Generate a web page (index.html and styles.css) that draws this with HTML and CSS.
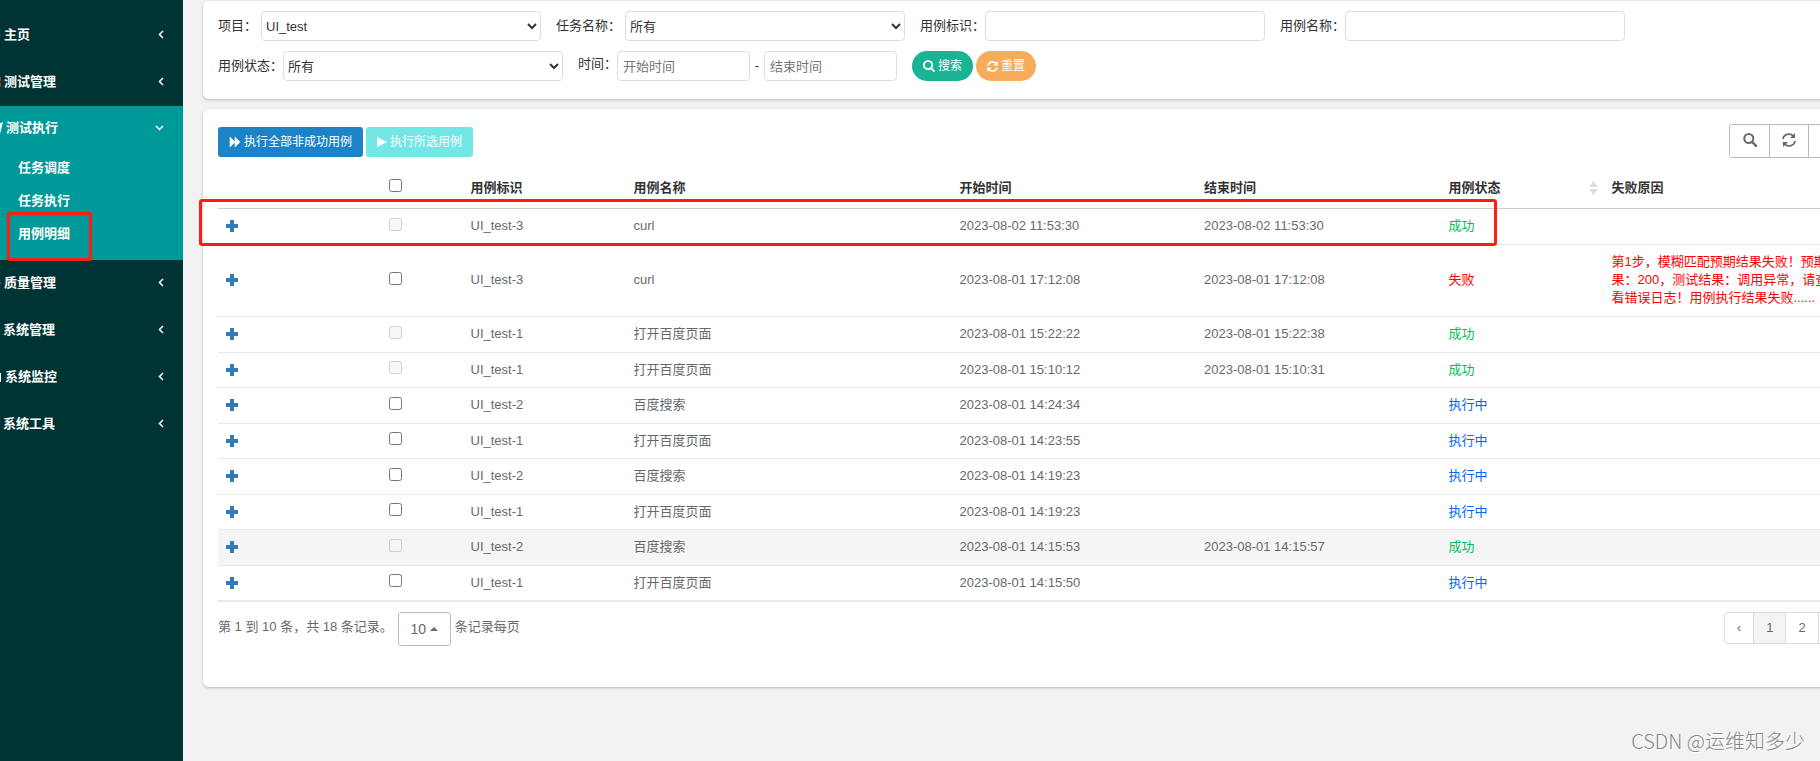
FILE: index.html
```html
<!DOCTYPE html>
<html lang="zh-CN">
<head>
<meta charset="utf-8">
<title>用例明细</title>
<link rel="stylesheet" href="styles.css">
</head>
<body>
<svg class="sprite" aria-hidden="true">
  <symbol id="plus" viewBox="0 0 12 12"><path d="M4 0h4v4h4v4H8v4H4V8H0V4h4z"/></symbol>
  <symbol id="left" viewBox="0 0 6 9"><path d="M5 1 1.500 4.500 5 8" fill="none" stroke="currentColor" stroke-width="1.500"/></symbol>
  <symbol id="down" viewBox="0 0 9 6"><path d="M1 1l3.500 3.500L8 1" fill="none" stroke="currentColor" stroke-width="1.500"/></symbol>
  <symbol id="search" viewBox="0 0 1664 1664"><path d="M1152 704q0-185-131.500-316.500T704 256 387.500 387.500 256 704t131.500 316.500T704 1152t316.500-131.500T1152 704zm512 832q0 52-38 90t-90 38q-54 0-90-38l-343-342q-179 124-399 124-143 0-273.500-55.500t-225-150-150-225T0 704t55.500-273.500 150-225 225-150T704 0t273.500 55.500 225 150 150 225T1408 704q0 220-124 399l343 343q37 37 37 90z"/></symbol>
  <symbol id="refresh" viewBox="0 0 1536 1536"><path d="M1511 928q0 5-1 7-64 268-268 434.500T764 1536q-146 0-282.500-55T238 1324l-129 129q-19 19-45 19t-45-19-19-45V960q0-26 19-45t45-19h448q26 0 45 19t19 45-19 45l-137 137q71 66 161 102t187 36q134 0 250-65t186-179q11-17 53-117 8-23 30-23h192q13 0 22.500 9.500t9.500 22.500zm25-800v448q0 26-19 45t-45 19h-448q-26 0-45-19t-19-45 19-45l138-138Q969 256 768 256q-134 0-250 65T332 500q-11 17-53 117-8 23-30 23H50q-13 0-22.500-9.500T18 608v-7q65-268 270-434.500T768 0q146 0 284 55.500T1297 212l130-129q19-19 45-19t45 19 19 45z"/></symbol>
  <symbol id="find" viewBox="0 0 14 14"><circle cx="5.800" cy="5.500" r="4.500" fill="none" stroke="currentColor" stroke-width="2"/><path d="M9 8.800l4.200 4" stroke="currentColor" stroke-width="2.400" stroke-linecap="round"/></symbol>
  <symbol id="reload" viewBox="0 0 14 14"><path d="M1 6a6 5.500 0 0 1 10.500-3M13 8a6 5.500 0 0 1-10.500 3" fill="none" stroke="currentColor" stroke-width="1.800"/><path d="M13 0v5H8zM1 14V9h5z"/></symbol>
  <symbol id="forward" viewBox="0 0 12 12"><path d="M1 1l5 5-5 5zM6 1l5 5-5 5z" stroke="currentColor" stroke-width="0.600"/></symbol>
  <symbol id="play" viewBox="0 0 10 12"><path d="M0 1l10 5-10 5z"/></symbol>
</svg>
<div class="app">
  <aside class="sidebar">
    <nav>
      <a class="item" href="#"><svg width="14" height="14" viewBox="0 0 14 14"><path class="red" d="M0 7l7-6 7 6-1 1H1z"/></svg>主页<svg class="caret" width="6" height="9"><use href="#left"/></svg></a>
      <a class="item" href="#"><svg width="14" height="14" viewBox="0 0 14 14"><path class="red" d="M1 2h13v4H1zM1 8h13v4H1z"/></svg>测试管理<svg class="caret" width="6" height="9"><use href="#left"/></svg></a>
      <div class="group">
        <a class="item" href="#"><svg width="16" height="14" viewBox="0 0 16 14"><path d="M2 7l14-6-3 12-4-4 3-4-5 4z"/></svg>测试执行<svg class="caret" width="9" height="6"><use href="#down"/></svg></a>
        <a class="sub" href="#">任务调度</a>
        <a class="sub" href="#">任务执行</a>
        <a class="sub" href="#">用例明细</a>
      </div>
      <a class="item" href="#"><svg width="14" height="14" viewBox="0 0 14 14"><path class="red" d="M0 6h14v2H0z"/></svg>质量管理<svg class="caret" width="6" height="9"><use href="#left"/></svg></a>
      <a class="item" href="#"><svg width="13" height="14" viewBox="0 0 13 14"><circle cx="6" cy="7" r="5"/></svg>系统管理<svg class="caret" width="6" height="9"><use href="#left"/></svg></a>
      <a class="item" href="#"><svg width="15" height="14" viewBox="0 0 15 14"><path d="M0 3h14v9H0z"/></svg>系统监控<svg class="caret" width="6" height="9"><use href="#left"/></svg></a>
      <a class="item" href="#"><svg width="13" height="14" viewBox="0 0 13 14"><path d="M1 2h11v10H1z"/></svg>系统工具<svg class="caret" width="6" height="9"><use href="#left"/></svg></a>
    </nav>
  </aside>
  <main>
    <form class="card filters">
      <div class="line">
        <div class="field spaced"><label for="project">项目：</label><select id="project"><option>UI_test</option></select></div>
        <div class="field spaced"><label for="task">任务名称：</label><select id="task"><option>所有</option></select></div>
        <div class="field"><label for="caseid">用例标识：</label><input id="caseid" type="text"></div>
        <div class="field"><label for="casename">用例名称：</label><input id="casename" type="text"></div>
      </div>
      <div class="line">
        <div class="field"><label for="status">用例状态：</label><select id="status"><option>所有</option></select></div>
        <div class="field"><label class="raised" for="start">时间：</label><input class="date" id="start" type="text" placeholder="开始时间"><span class="dash">-</span><input class="date" type="text" placeholder="结束时间" aria-label="结束时间"></div>
        <div class="buttons">
          <button type="button" class="btn round green"><svg width="12" height="12"><use href="#search"/></svg>搜索</button>
          <button type="button" class="btn round orange"><svg width="11" height="11"><use href="#refresh"/></svg>重置</button>
        </div>
      </div>
    </form>
    <section class="card results">
      <div class="toolbar">
        <div class="buttons">
          <button type="button" class="btn blue"><svg width="12" height="12"><use href="#forward"/></svg>执行全部非成功用例</button>
          <button type="button" class="btn cyan" disabled><svg width="10" height="12"><use href="#play"/></svg>执行所选用例</button>
        </div>
        <div class="tools">
          <button type="button" aria-label="搜索"><svg width="14" height="14"><use href="#find"/></svg></button>
          <button type="button" aria-label="刷新"><svg width="14" height="14"><use href="#reload"/></svg></button>
          <button type="button" aria-label="列"></button>
        </div>
      </div>
      <table>
        <colgroup><col class="w2"><col class="w1"><col class="w2"><col class="w4"><col class="w3"><col class="w3"><col class="w2"><col class="w3"></colgroup>
        <thead><tr><th></th><th><input type="checkbox" aria-label="全选"></th><th>用例标识</th><th>用例名称</th><th>开始时间</th><th>结束时间</th><th class="sortable"><div class="sort">用例状态<svg width="9" height="14" viewBox="0 0 9 14"><path d="M4.500 0L9 6H0zM0 8h9l-4.500 6z"/></svg></div></th><th>失败原因</th></tr></thead>
        <tbody>
          <tr><td><svg class="plus" width="12" height="12"><use href="#plus"/></svg></td><td><input type="checkbox" disabled aria-label="选择"></td><td>UI_test-3</td><td>curl</td><td>2023-08-02 11:53:30</td><td>2023-08-02 11:53:30</td><td class="ok">成功</td><td></td></tr>
          <tr class="tall"><td><svg class="plus" width="12" height="12"><use href="#plus"/></svg></td><td><input type="checkbox" aria-label="选择"></td><td>UI_test-3</td><td>curl</td><td>2023-08-01 17:12:08</td><td>2023-08-01 17:12:08</td><td class="fail">失败</td><td class="fail">第1步，模糊匹配预期结果失败！预期结果：200，测试结果：调用异常，请查看错误日志！用例执行结果失败......</td></tr>
          <tr><td><svg class="plus" width="12" height="12"><use href="#plus"/></svg></td><td><input type="checkbox" disabled aria-label="选择"></td><td>UI_test-1</td><td>打开百度页面</td><td>2023-08-01 15:22:22</td><td>2023-08-01 15:22:38</td><td class="ok">成功</td><td></td></tr>
          <tr><td><svg class="plus" width="12" height="12"><use href="#plus"/></svg></td><td><input type="checkbox" disabled aria-label="选择"></td><td>UI_test-1</td><td>打开百度页面</td><td>2023-08-01 15:10:12</td><td>2023-08-01 15:10:31</td><td class="ok">成功</td><td></td></tr>
          <tr><td><svg class="plus" width="12" height="12"><use href="#plus"/></svg></td><td><input type="checkbox" aria-label="选择"></td><td>UI_test-2</td><td>百度搜索</td><td>2023-08-01 14:24:34</td><td></td><td class="run">执行中</td><td></td></tr>
          <tr><td><svg class="plus" width="12" height="12"><use href="#plus"/></svg></td><td><input type="checkbox" aria-label="选择"></td><td>UI_test-1</td><td>打开百度页面</td><td>2023-08-01 14:23:55</td><td></td><td class="run">执行中</td><td></td></tr>
          <tr><td><svg class="plus" width="12" height="12"><use href="#plus"/></svg></td><td><input type="checkbox" aria-label="选择"></td><td>UI_test-2</td><td>百度搜索</td><td>2023-08-01 14:19:23</td><td></td><td class="run">执行中</td><td></td></tr>
          <tr><td><svg class="plus" width="12" height="12"><use href="#plus"/></svg></td><td><input type="checkbox" aria-label="选择"></td><td>UI_test-1</td><td>打开百度页面</td><td>2023-08-01 14:19:23</td><td></td><td class="run">执行中</td><td></td></tr>
          <tr class="hover"><td><svg class="plus" width="12" height="12"><use href="#plus"/></svg></td><td><input type="checkbox" disabled aria-label="选择"></td><td>UI_test-2</td><td>百度搜索</td><td>2023-08-01 14:15:53</td><td>2023-08-01 14:15:57</td><td class="ok">成功</td><td></td></tr>
          <tr><td><svg class="plus" width="12" height="12"><use href="#plus"/></svg></td><td><input type="checkbox" aria-label="选择"></td><td>UI_test-1</td><td>打开百度页面</td><td>2023-08-01 14:15:50</td><td></td><td class="run">执行中</td><td></td></tr>
        </tbody>
      </table>
      <div class="footer">
        <span class="info">第 1 到 10 条，共 18 条记录。</span>
        <button type="button" class="size">10<svg width="8" height="4" viewBox="0 0 8 4"><path d="M4 0l4 4H0z"/></svg></button>
        <span>条记录每页</span>
        <div class="pages"><a href="#">‹</a><a class="current" href="#">1</a><a href="#">2</a><a href="#">›</a></div>
      </div>
    </section>
  </main>
</div>
<div class="mark mark-row"></div>
<div class="mark mark-menu"></div>
<div class="watermark">CSDN @运维知多少</div>
</body>
</html>
```
FILE: styles.css
```css
* { box-sizing: border-box; }
body {
  margin: 0;
  min-height: 100vh;
  position: relative;
  overflow: hidden;
  background: #f2f2f2;
  color: #676a6c;
  font: 13px/18px "Liberation Sans", "Noto Sans CJK SC", sans-serif;
}
.sprite { display: none; }
svg { fill: currentColor; flex: none; }
a { color: inherit; text-decoration: none; }
button, input, select { font: inherit; }

.app { display: flex; min-height: 100vh; margin-right: -43px; }

.sidebar { flex: 0 0 183px; overflow: hidden; background: #033; color: #fff; font-weight: bold; }
.sidebar nav { margin-left: -13px; padding-top: 12px; }
.item { display: flex; align-items: center; gap: 3px; height: 47px; padding: 0 19px 2px 0; }
.item .caret { margin-left: auto; }
.red { fill: #a33; }
.group { padding-bottom: 9px; background: #099; }
.group .item { height: 46px; }
.sub { display: flex; align-items: center; height: 33px; padding: 0 0 2px 31px; }

main { flex: 1; min-width: 0; padding: 1px 0 0 20px; }
.card { background: #fff; border-radius: 6px; box-shadow: 0 1px 3px rgba(0, 0, 0, .25); }
.filters { height: 98px; padding: 10px 15px; color: #333; }
.line { display: flex; gap: 15px; margin-bottom: 10px; white-space: nowrap; }
.field { display: flex; align-items: center; }
.spaced { gap: 4px; }
.raised { padding-bottom: 4px; }
.filters select, .filters input {
  width: 280px;
  height: 30px;
  border: 1px solid #ddd;
  border-radius: 4px;
  background: #fff;
  color: #333;
  outline: none;
}
.filters input { padding: 0 5px; }
.filters input.date { width: 133px; }
.filters input::placeholder { color: #757575; }
.dash { width: 14px; text-align: center; }
.buttons { display: flex; gap: 3px; }
.btn {
  display: flex;
  align-items: center;
  gap: 3px;
  height: 30px;
  padding: 0 11px;
  border: 0;
  border-radius: 3px;
  color: #fff;
  font-size: 12px;
  white-space: nowrap;
}
.round { border-radius: 15px; }
.green { background: #1ab394; }
.orange { background: #f8ac59; }
.blue { background: #1c84c6; }
.cyan { background: #72e7e6; }

.results { margin-top: 10px; padding: 15px; height: 578px; }
.toolbar { display: flex; align-items: flex-end; justify-content: space-between; height: 34px; }
.toolbar .buttons { padding-bottom: 1px; }
.tools { display: flex; border: 1px solid #bbb; border-radius: 3px; overflow: hidden; }
.tools button {
  display: flex;
  align-items: center;
  justify-content: center;
  width: 39px;
  height: 32px;
  padding: 0 0 2px;
  border: 0;
  background: #fff;
  color: #676a6c;
}
.tools button + button { border-left: 1px solid #bbb; }

table { width: 100%; margin-top: 10px; table-layout: fixed; border-collapse: separate; border-spacing: 0; }
.w1 { width: 5%; }
.w2 { width: 10%; }
.w3 { width: 15%; }
.w4 { width: 20%; }
th, td { padding: 7px 8px 8px; text-align: left; vertical-align: middle; }
th { height: 41px; border-bottom: 1px solid #ccc; color: #333; }
th.sortable { padding-right: 6px; }
td { height: 36px; border-bottom: 1px solid #e7eaec; }
tr:nth-child(even) td { height: 35px; }
tr.tall td { height: 72px; }
tr:last-child td { height: 36px; border-bottom-width: 2px; }
.hover td { background: #f5f5f5; }
td input, th input { display: block; width: 13px; height: 13px; margin: 0 0 4px; }
.plus { display: block; color: #337ab7; }
.sort { display: flex; align-items: center; justify-content: space-between; }
.sort svg { color: #ddd; }
.ok { color: #00c05a; }
.fail { color: #f00; }
.run { color: #06f; }

.footer { display: flex; align-items: flex-start; gap: 4px; padding-top: 10px; line-height: 30px; }
.info { margin-right: 1px; }
.size {
  display: flex;
  align-items: center;
  justify-content: center;
  gap: 4px;
  width: 53px;
  height: 34px;
  padding: 0;
  border: 1px solid #bbb;
  border-radius: 3px;
  background: #fff;
  color: #676a6c;
  font-size: 14px;
}
.pages { display: flex; margin-left: auto; border: 1px solid #ddd; border-radius: 4px; overflow: hidden; }
.pages a { padding: 0 12px; }
.pages a + a { border-left: 1px solid #ddd; }
.pages .current { background: #f4f4f4; }

.mark { position: absolute; border: 3px solid #ff1c12; border-radius: 3px; pointer-events: none; }
.mark-row { left: 199px; top: 199px; width: 1298px; height: 47px; }
.mark-menu { left: 7px; top: 212px; width: 85px; height: 49px; }
.watermark {
  position: absolute;
  right: 15px;
  bottom: 5px;
  color: #888;
  font: 300 20px/30px "Noto Sans CJK SC", sans-serif;
  text-shadow: 1px 1px 0 #fff;
}
```
